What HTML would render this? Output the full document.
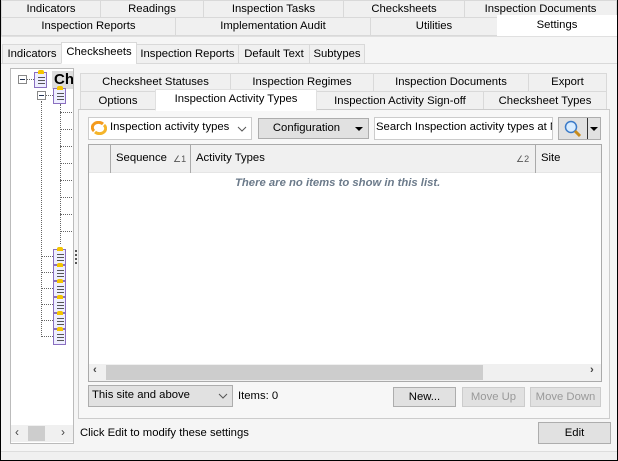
<!DOCTYPE html><html><head><style>
*{box-sizing:border-box;margin:0;padding:0}
body{width:618px;height:461px;position:relative;background:#f5f5f5;font-family:"Liberation Sans",sans-serif;font-size:11.3px;color:#000;overflow:hidden}
.a{position:absolute}
.t{position:absolute;background:#f0f0f0;border:1px solid #d9d9d9;text-align:center;white-space:nowrap;overflow:hidden}
.b{position:absolute;background:#e1e1e1;border:1px solid #adadad;text-align:center;white-space:nowrap}
.ic{position:absolute;width:13px;height:16px;background:#eef;border:1px solid #8a6fc0}
.ic:before{content:"";position:absolute;left:3px;top:-3px;width:6px;height:4px;background:#f4c400;border-radius:2px 2px 0 0}
.ic:after{content:"";position:absolute;left:3px;top:4px;width:7px;height:8px;background:repeating-linear-gradient(#555 0 1px,transparent 1px 3px)}
.dv{position:absolute;border-left:1px dotted #666}
.dh{position:absolute;border-top:1px dotted #666}
</style></head><body>
<div class="a" style="left:0;top:0;width:618px;height:461px;border:1px solid #000;border-top:none"></div>
<div class="t" style="left:1px;top:0;width:100px;height:18px;line-height:16px">Indicators</div>
<div class="t" style="left:100px;top:0;width:104px;height:18px;line-height:16px">Readings</div>
<div class="t" style="left:203px;top:0;width:141px;height:18px;line-height:16px">Inspection Tasks</div>
<div class="t" style="left:343px;top:0;width:122px;height:18px;line-height:16px">Checksheets</div>
<div class="t" style="left:464px;top:0;width:153px;height:18px;line-height:16px">Inspection Documents</div>
<div class="t" style="left:1px;top:17px;width:175px;height:19px;line-height:17px">Inspection Reports</div>
<div class="t" style="left:175px;top:17px;width:196px;height:19px;line-height:17px">Implementation Audit</div>
<div class="t" style="left:370px;top:17px;width:128px;height:19px;line-height:17px">Utilities</div>
<div class="t" style="left:497px;top:15px;width:120px;height:22px;line-height:18px;background:#fff;border-color:#fff">Settings</div>
<div class="a" style="left:1px;top:36px;width:616px;height:1px;background:#e0e0e0"></div>
<div class="a" style="left:1px;top:63px;width:616px;height:1px;background:#d9d9d9"></div>
<div class="t" style="left:2px;top:44px;width:60px;height:20px;line-height:18px">Indicators</div>
<div class="t" style="left:61px;top:42px;width:76px;height:22px;line-height:18px;background:#fff;border-bottom-color:#fff">Checksheets</div>
<div class="t" style="left:136px;top:44px;width:103px;height:20px;line-height:18px">Inspection Reports</div>
<div class="t" style="left:238px;top:44px;width:72px;height:20px;line-height:18px">Default Text</div>
<div class="t" style="left:309px;top:44px;width:56px;height:20px;line-height:18px">Subtypes</div>
<div class="a" style="left:10px;top:68px;width:64px;height:376px;background:#fff;border:1px solid #bbb"></div>
<div class="a" style="left:18px;top:75px;width:9px;height:9px;border:1px solid #888;background:#fff"><div class="a" style="left:1px;top:3px;width:5px;height:1px;background:#235"></div></div>
<div class="dh" style="left:27px;top:79px;width:7px"></div>
<div class="ic" style="left:34px;top:72px"></div>
<div class="a" style="left:52px;top:71px;width:21px;height:18px;background:#ddd;font-weight:bold;font-size:15px;line-height:18px;padding-left:2px;overflow:hidden">Ch</div>
<div class="a" style="left:37px;top:91px;width:9px;height:9px;border:1px solid #888;background:#fff"><div class="a" style="left:1px;top:3px;width:5px;height:1px;background:#235"></div></div>
<div class="dh" style="left:46px;top:95px;width:7px"></div>
<div class="ic" style="left:53px;top:88px"></div>
<div class="dv" style="left:41px;top:101px;height:236px"></div>
<div class="dv" style="left:60px;top:104px;height:140px"></div>
<div class="dh" style="left:60px;top:112px;width:12px"></div><div class="dh" style="left:60px;top:129px;width:12px"></div><div class="dh" style="left:60px;top:146px;width:12px"></div><div class="dh" style="left:60px;top:163px;width:12px"></div><div class="dh" style="left:60px;top:180px;width:12px"></div><div class="dh" style="left:60px;top:197px;width:12px"></div><div class="dh" style="left:60px;top:214px;width:12px"></div><div class="dh" style="left:60px;top:231px;width:12px"></div>
<div class="dh" style="left:41px;top:256px;width:12px"></div><div class="ic" style="left:53px;top:249px"></div>
<div class="dh" style="left:41px;top:272px;width:12px"></div><div class="ic" style="left:53px;top:265px"></div>
<div class="dh" style="left:41px;top:288px;width:12px"></div><div class="ic" style="left:53px;top:281px"></div>
<div class="dh" style="left:41px;top:304px;width:12px"></div><div class="ic" style="left:53px;top:297px"></div>
<div class="dh" style="left:41px;top:320px;width:12px"></div><div class="ic" style="left:53px;top:313px"></div>
<div class="dh" style="left:41px;top:336px;width:12px"></div><div class="ic" style="left:53px;top:329px"></div>
<div class="dv" style="left:75px;top:250px;height:14px;border-left:2px dotted #555"></div>
<div class="a" style="left:11px;top:425px;width:62px;height:17px;background:#f0f0f0"></div>
<div class="a" style="left:15px;top:425px;font-size:12px;color:#444">‹</div>
<div class="a" style="left:28px;top:426px;width:17px;height:15px;background:#cdcdcd"></div>
<div class="a" style="left:61px;top:425px;font-size:12px;color:#444">›</div>
<div class="t" style="left:80px;top:73px;width:151px;height:19px;line-height:17px">Checksheet Statuses</div>
<div class="t" style="left:230px;top:73px;width:144px;height:19px;line-height:17px">Inspection Regimes</div>
<div class="t" style="left:373px;top:73px;width:156px;height:19px;line-height:17px">Inspection Documents</div>
<div class="t" style="left:528px;top:73px;width:79px;height:19px;line-height:17px">Export</div>
<div class="t" style="left:80px;top:91px;width:76px;height:19px;line-height:18px">Options</div>
<div class="t" style="left:316px;top:91px;width:168px;height:19px;line-height:18px">Inspection Activity Sign-off</div>
<div class="t" style="left:483px;top:91px;width:124px;height:19px;line-height:18px">Checksheet Types</div>
<div class="a" style="left:78px;top:109px;width:532px;height:310px;border:1px solid #ccc;background:#f7f7f7"></div>
<div class="t" style="left:155px;top:89px;width:162px;height:22px;line-height:18px;background:#fff;border-color:#e0e0e0;border-bottom-color:#fff">Inspection Activity Types</div>
<div class="a" style="left:88px;top:117px;width:164px;height:23px;border:1px solid #ccc;background:#fff"></div>
<svg class="a" style="left:91px;top:121px" width="16" height="14"><path d="M3 10 A6 5 0 0 1 12 3" stroke="#f39a1e" stroke-width="3" fill="none"/><path d="M13 4 A6 5 0 0 1 4 11" stroke="#f5b52a" stroke-width="3" fill="none"/></svg>
<div class="a" style="left:110px;top:121px">Inspection activity types</div>
<svg class="a" style="left:237px;top:126px" width="10" height="6"><path d="M1 1 L5 5 L9 1" stroke="#555" fill="none"/></svg>
<div class="b" style="left:258px;top:118px;width:111px;height:21px;line-height:19px;padding-right:14px">Configuration</div>
<div class="a" style="left:355px;top:127px;border:4px solid transparent;border-top:4px solid #000"></div>
<div class="a" style="left:374px;top:117px;width:179px;height:23px;border:1px solid #ccc;background:#fff;overflow:hidden;white-space:nowrap;line-height:19px;padding-left:1px">Search Inspection activity types at N</div>
<div class="b" style="left:558px;top:117px;width:43px;height:23px"></div>
<div class="a" style="left:587px;top:118px;width:1px;height:21px;background:#333"></div>
<svg class="a" style="left:563px;top:119px" width="20" height="19"><circle cx="8" cy="8" r="5.5" fill="#d8ecff" stroke="#3a7ac8" stroke-width="1.5"/><path d="M12 12 L17 17" stroke="#c88b1a" stroke-width="3"/></svg>
<div class="a" style="left:590px;top:127px;border:4px solid transparent;border-top:4px solid #000"></div>
<div class="a" style="left:88px;top:144px;width:514px;height:238px;border:1px solid #aaa;background:#fff"></div>
<div class="a" style="left:89px;top:145px;width:512px;height:28px;background:#f0f0f0;border-bottom:1px solid #e5e5e5"></div>
<div class="a" style="left:110px;top:145px;width:1px;height:28px;background:#aaa"></div>
<div class="a" style="left:190px;top:145px;width:1px;height:28px;background:#aaa"></div>
<div class="a" style="left:535px;top:145px;width:1px;height:28px;background:#aaa"></div>
<div class="a" style="left:116px;top:152px">Sequence</div><div class="a" style="left:173px;top:154px;font-size:9px;color:#555">∠1</div>
<div class="a" style="left:196px;top:152px">Activity Types</div><div class="a" style="left:516px;top:154px;font-size:9px;color:#555">∠2</div>
<div class="a" style="left:541px;top:152px">Site</div>
<div class="a" style="left:235px;top:177px;font-weight:bold;font-style:italic;color:#6b7a8a">There are no items to show in this list.</div>
<div class="a" style="left:89px;top:364px;width:512px;height:17px;background:#f0f0f0"></div>
<div class="a" style="left:106px;top:365px;width:377px;height:15px;background:#cdcdcd"></div>
<div class="a" style="left:93px;top:364px;color:#444;font-weight:bold">‹</div>
<div class="a" style="left:590px;top:364px;color:#444;font-weight:bold">›</div>
<div class="b" style="left:88px;top:385px;width:145px;height:22px;text-align:left;line-height:19px;padding-left:3px">This site and above</div>
<svg class="a" style="left:218px;top:393px" width="10" height="6"><path d="M1 1 L5 5 L9 1" stroke="#555" fill="none"/></svg>
<div class="a" style="left:238px;top:390px">Items: 0</div>
<div class="b" style="left:393px;top:387px;width:63px;height:20px;line-height:18px">New...</div>
<div class="b" style="left:462px;top:387px;width:63px;height:20px;line-height:18px;color:#999;border-color:#ccc">Move Up</div>
<div class="b" style="left:530px;top:387px;width:71px;height:20px;line-height:18px;color:#999;border-color:#ccc">Move Down</div>
<div class="a" style="left:80px;top:427px">Click Edit to modify these settings</div>
<div class="b" style="left:538px;top:422px;width:73px;height:22px;line-height:20px">Edit</div>
<div class="a" style="left:1px;top:451px;width:616px;height:1px;background:#ddd"></div>
<div class="a" style="left:1px;top:452px;width:616px;height:8px;background:#f0f0f0"></div>
</body></html>
